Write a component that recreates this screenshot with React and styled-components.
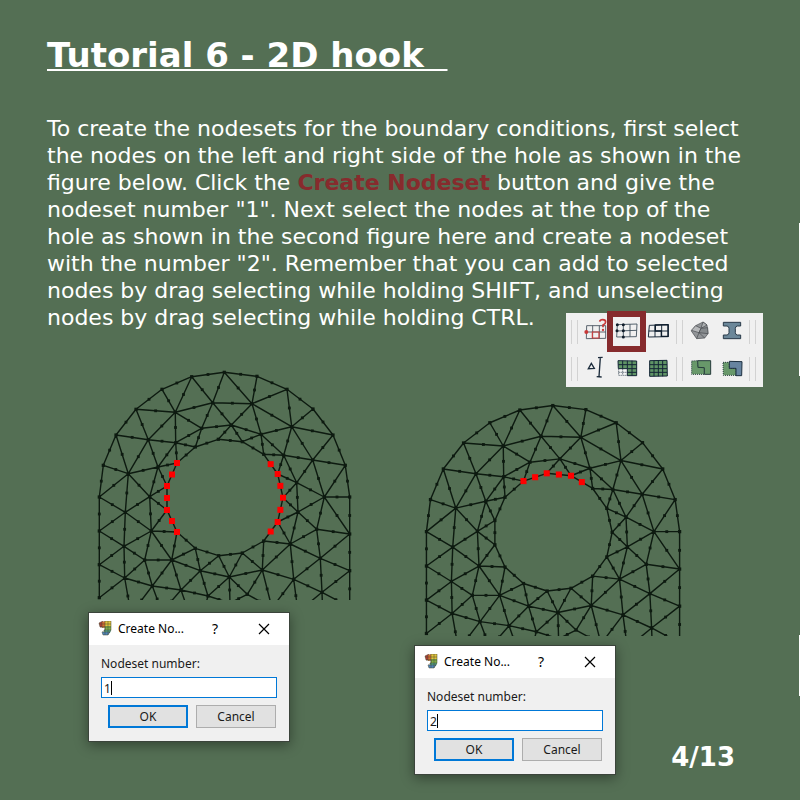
import React from "react";
import styled, { createGlobalStyle } from "styled-components";

const GlobalStyle = createGlobalStyle`
  * { box-sizing: border-box; }
  body { margin: 0; background: #546f54; }
`;

const Slide = styled.main`
  position: relative;
  min-height: 100vh;
  overflow: hidden;
  background: #546f54;
  color: #fff;
  font-family: "DejaVu Sans", sans-serif;
`;

const Title = styled.h1`
  margin: 0;
  padding: 35px 47px 0;
  font-size: 34px;
  line-height: 40px;
  font-weight: bold;
  white-space: pre;
  text-decoration: underline;
  text-decoration-thickness: 2px;
  text-underline-offset: 2px;
`;

const Intro = styled.section`
  position: relative;
  padding: 40px 47px 0;
`;

const Text = styled.p`
  margin: 0;
  max-width: 706px;
  font-size: 22px;
  line-height: 27px;
`;

const Term = styled.strong`
  color: #872b2d;
`;

const Toolbar = styled.div`
  position: absolute;
  right: 37px;
  bottom: -56px;
  width: 197px;
  padding-left: 4px;
  background: #f0f0f0;
`;

const ToolRow = styled.div`
  display: flex;
  align-items: center;
  height: 37px;
`;

const Separator = styled.span`
  width: 7px;
  height: 24px;
  margin: 0 1px;
  border: solid #d2d2d2;
  border-width: 0 1px;
`;

const ToolButton = styled.button`
  position: relative;
  display: block;
  width: 32px;
  height: 37px;
  padding: 0;
  border: 0;
  background: none;
  svg { display: block; }
  &[aria-pressed="true"]::after {
    content: "";
    position: absolute;
    inset: -2px -3px -2px -4px;
    border: 6px solid #862b2d;
  }
`;

const Figures = styled.section`
  display: grid;
  grid-template-columns: 274px 1fr;
  column-gap: 52px;
  align-items: start;
  padding: 37px 65px 25px 88px;
`;

const Figure = styled.figure`
  grid-row: 1;
  grid-column: ${(p) => p.$column};
  margin: 0;
  padding-top: ${(p) => p.$drop}px;
`;

const Mesh = styled.svg`
  display: block;
  margin-bottom: ${(p) => p.$gap}px;
`;

const Dialog = styled.form`
  width: 202px;
  border: 1px solid #3b443b;
  background: #f0f0f0;
  color: #1a1a1a;
  font: 12px/16px "Noto Sans", sans-serif;
  box-shadow: 0 3px 12px rgba(0, 0, 0, 0.4);
`;

const TitleBar = styled.header`
  display: flex;
  align-items: center;
  height: 32px;
  padding: 0 15px 0 9px;
  background: #fff;
  color: #000;
`;

const DialogName = styled.span`
  flex: 1;
  margin-left: 6px;
`;

const BarButton = styled.button`
  width: 20px;
  height: 20px;
  margin-left: ${(p) => p.$gap || 0}px;
  padding: 0;
  border: 0;
  background: none;
  color: #000;
  font: 14px/18px "Noto Sans", sans-serif;
  svg { display: block; margin: 4px; }
`;

const DialogBody = styled.div`
  padding: 11px 12px 13px;
`;

const Field = styled.div`
  position: relative;
  margin: 5px 0 7px;
`;

const FieldLabel = styled.label`
  display: block;
`;

const NumberInput = styled.input`
  display: block;
  width: 100%;
  height: 21px;
  padding: 1px 2px 0;
  border: 1px solid #0078d7;
  border-radius: 0;
  background: #fff;
  color: #1a1a1a;
  font: 12px/16px "Noto Sans", sans-serif;
`;

const Caret = styled.span`
  position: absolute;
  left: 10px;
  top: 4px;
  width: 1px;
  height: 14px;
  background: #000;
`;

const Actions = styled.div`
  display: flex;
  justify-content: flex-end;
  gap: 8px;
  padding-right: 1px;
`;

const ActionButton = styled.button`
  width: 80px;
  height: 23px;
  padding: 0;
  border: ${(p) => (p.$primary ? "2px solid #0078d7" : "1px solid #adadad")};
  background: #e1e1e1;
  color: #1a1a1a;
  font: 12px/16px "Noto Sans", sans-serif;
`;

const PageNumber = styled.footer`
  grid-row: 1;
  grid-column: 2;
  align-self: end;
  justify-self: end;
  margin-bottom: 2px;
  font-size: 26px;
  line-height: 32px;
  font-weight: bold;
`;

const EdgeMark = styled.span`
  position: absolute;
  right: 0;
  top: ${(p) => p.$top}px;
  width: 1px;
  height: ${(p) => p.$height}px;
  background: #fff;
`;

const NODES = {
  A0: [224.3, 372.3], A1: [191.7, 376.7], A2: [162, 389.3], A3: [136, 409.3], A4: [116, 435],
  A5: [103.3, 465.3], A6: [99.3, 497], A7: [99.3, 531], A8: [99.3, 564.7], A9: [99.3, 597.7],
  B1: [257, 376.3], B2: [287, 389.3], B3: [313, 409], B4: [333, 435], B5: [345.3, 465.3],
  B6: [349.7, 497], B7: [349.7, 534], B8: [349.7, 570.7], B9: [349.7, 607],
  C1: [175.3, 412.3], C2: [212.7, 402.7], C3: [252, 403.7], C4: [291.7, 426.7],
  C5: [148.3, 439.7], C6: [128.3, 473.7], C7: [312.7, 460],
  D1: [175.7, 442.7], D2: [201.7, 428.3], D3: [231.3, 425], D4: [261, 434.3],
  D5: [283.7, 455.3], D6: [158, 467], D7: [296.7, 482.7],
  H1: [195.3, 447], H2: [218.3, 439.3], H3: [242.3, 441.7], H4: [263.7, 454.3],
  H5: [177, 463], H6: [167, 486], H7: [167, 510], H8: [177, 532], H9: [195.3, 548.3],
  H10: [218.7, 555.7], H11: [242.3, 553], H12: [263.7, 541], H13: [277.7, 522],
  H14: [283, 497.7], H15: [277.7, 474],
  E1: [149.7, 496.7], E2: [125.3, 512.3], E3: [151.3, 531], E4: [124, 546.3],
  E5: [144.7, 560], E6: [171.7, 560], E7: [124.7, 578], E8: [152.3, 586], E9: [181, 590],
  E10: [200.3, 570.7], E11: [229.3, 577], E12: [208, 596],
  F1: [324.3, 497], F2: [298, 512], F3: [316.7, 529.3], F4: [290.3, 544], F5: [320.3, 558.3],
  F6: [262.3, 570], F7: [293.7, 579.3], F8: [322, 592.3], F9: [247.3, 594.3],
  G1: [131, 614], G2: [162, 612], G3: [189, 613], G4: [202, 618], G5: [230, 603],
  G6: [272, 608], G7: [298, 612], G8: [323, 620],
};

const EDGES = `
A0-A1 A1-A2 A2-A3 A3-A4 A4-A5 A5-A6 A6-A7 A7-A8 A8-A9
A0-B1 B1-B2 B2-B3 B3-B4 B4-B5 B5-B6 B6-B7 B7-B8 B8-B9
A1-C1 A1-C2 A2-C1 A3-C1 A3-C5 A4-C5 A4-C6 A5-C6 A6-C6 C6-C5 C6-D6 C6-E1 C6-E2
A6-E2 A7-E2 A7-E4 A8-E4 A8-E7 A9-E7 A0-C2 A0-C3 B1-C3 B2-C3 B2-C4 B3-C4 B4-C4
B4-C7 B5-C7 C4-C7 C1-C2 C1-C5 C1-D1 C1-D2 C2-D2 C2-C3 C2-D3 C3-D3 C3-D4 C3-C4
C4-D4 C4-D5 C5-D1 C5-D6 D1-D2 D1-D6 D1-H5 D1-H1 D2-H1 D2-D3 D3-H2 D3-H3 D3-D4
D4-H3 D4-H4 D4-D5 D5-H4 D5-H15 D5-D7 D5-C7 C7-D7 C7-F1 B5-F1 H15-D7 D7-F1 D7-F2
D7-H14 H14-F2 H13-F2 F2-F1 F2-F3 F2-F4 F1-F3 F1-B6 F1-B7 F3-B7 F3-F4 F3-F5 F5-B7
F5-B8 F5-F4 F5-F7 F5-F8 F4-H13 F4-H12 F4-F6 F4-F7 F6-H12 F6-H11 F6-F7 F6-E11
F6-F9 F6-G6 E11-H11 E11-H10 D6-H5 D6-H6 D6-E1 E1-H6 E1-H7 E1-E2 E1-E3 H7-E3
E3-H8 E3-E2 E3-E4 E3-E5 E3-E6 H8-E6 E6-H9 E6-E5 E6-E8 E6-E9 E6-E10 H9-E10
E10-H10 E10-E9 E10-E12 E10-E11 E2-E4 E4-E5 E4-E7 E5-E7 E5-E8 E7-E8 E8-E9 E9-E12
E11-E12 E11-F9 E11-G5 E7-G1 E8-G1 E8-G2 E9-G2 E9-G3 E12-G4 E12-G5 F9-G5 F9-G6
F7-G6 F7-G7 F7-F8 F8-B8 F8-G7 F8-G8 F8-B9
H5-H1 H1-H2 H2-H3 H3-H4 H4-H15 H15-H14 H14-H13 H13-H12 H12-H11 H11-H10 H10-H9
H9-H8 H8-H7 H7-H6 H6-H5
`.trim().split(/\s+/).map((e) => e.split("-"));

const locate = (key) => {
  const [a, b] = key.split("-");
  if (!b) return NODES[a];
  return [0, 1].map((i) => (NODES[a][i] + NODES[b][i]) / 2);
};

const SIDES = [
  "H5", "H5-H6", "H6", "H6-H7", "H7", "H7-H8", "H8",
  "H4-H15", "H15", "H15-H14", "H14", "H14-H13", "H13", "H13-H12",
];
const TOP = ["H1", "H1-H2", "H2", "H2-H3", "H3", "H3-H4"];

const Dot = ({ at, size, fill }) => (
  <rect x={at[0] - size / 2} y={at[1] - size / 2} width={size} height={size} fill={fill} />
);

function HookMesh({ selected, left, width, height, gap, label }) {
  return (
    <Mesh $gap={gap} width={width} height={height} viewBox={`${left} 368 271 232`} role="img" aria-label={label}>
      <path
        d={EDGES.map(([a, b]) => `M${NODES[a].join(" ")}L${NODES[b].join(" ")}`).join("")}
        stroke="#0d1a10"
        strokeWidth="1.4"
        fill="none"
      />
      {EDGES.map((e) => <Dot key={e.join()} at={locate(e.join("-"))} size={2.8} fill="#0d1a10" />)}
      {Object.keys(NODES).map((k) => <Dot key={k} at={NODES[k]} size={3.2} fill="#0d1a10" />)}
      {selected.map((k) => <Dot key={k} at={locate(k)} size={6} fill="#ff0000" />)}
    </Mesh>
  );
}

const INK = "#1c2c3c";

function QueryNodesIcon() {
  return (
    <svg width="32" height="37" viewBox="57 24 96 111" fill="none">
      <path d="M80 62H137V100L79 101ZM79 81H137M98 62V101M118 62V100" stroke="#3c4854" strokeWidth="2.5" />
      <path d="M97 81H117V99H97Z" stroke="#d04040" strokeWidth="3.5" />
      <circle cx="79" cy="81" r="6" fill="#c83838" />
      <path d="M119 50Q120 44 128 44Q137 44 137 51Q137 56 129 60V67" stroke="#c83838" strokeWidth="5" />
      <circle cx="129" cy="75" r="3.5" fill="#c83838" />
    </svg>
  );
}

function CreateNodesetIcon() {
  return (
    <svg width="32" height="37" viewBox="153 24 96 111" fill="none">
      <path d="M172 59L231 57L229 95L170 96ZM171 78L230 76M190 58V96M210 58V95" stroke="#344452" strokeWidth="2.5" />
      {[[172, 59], [190, 59], [171, 77], [190, 77], [190, 96]].map(([x, y]) => (
        <circle key={`${x},${y}`} cx={x} cy={y} r="4.5" fill="#101c2a" />
      ))}
    </svg>
  );
}

function CreateElementsetIcon() {
  return (
    <svg width="32" height="37" viewBox="249 24 96 111" fill="none">
      <path d="M268 61L325 59V95L265 96ZM266 78H325M285 60V96M305 60V95" stroke={INK} strokeWidth="3" />
      <path d="M286 60L324 59V94H304V78H286Z" stroke="#0d1c2c" strokeWidth="4" />
    </svg>
  );
}

function SolidIcon() {
  return (
    <svg width="32" height="37" viewBox="372 24 96 111" strokeWidth="2" stroke="#45494d" strokeLinejoin="round">
      <path d="M407 62L429 51L441 60L444 86L434 99L410 101L394 78Z" fill="#929598" />
      <path d="M429 51L423 70L441 60Z" fill="#adb0b2" />
      <path d="M394 76L407 62L423 70L417 83Z" fill="#b6b8ba" />
      <path d="M423 70L443 68L444 86L417 83Z" fill="#85898c" />
      <path d="M417 83L410 101M417 83L434 99" fill="none" />
    </svg>
  );
}

function BeamIcon() {
  return (
    <svg width="32" height="37" viewBox="468 24 96 111">
      <path
        d="M490 52H542V63H532Q526 64 526 70V83Q526 89 532 90H542V101H490V90H501Q507 89 507 83V70Q507 64 501 63H490Z"
        fill="#6b8799" stroke="#293a49" strokeWidth="3"
      />
    </svg>
  );
}

function MeshSizeIcon() {
  return (
    <svg width="32" height="37" viewBox="57 135 96 111" fill="none" stroke={INK}>
      <path d="M94 175L103 190L85 191Z" strokeWidth="4" />
      <path d="M114 158L128 157M121 158L117 215M110 215L125 216" strokeWidth="4" />
    </svg>
  );
}

function MeshPartIcon() {
  return (
    <svg width="32" height="37" viewBox="153 135 96 111" fill="none">
      <path d="M174 167L230 168L230 212H202V191H175Z" fill="#5f9465" />
      <path d="M176 192H201V212H176Z" fill="#f6f6f6" />
      <path d="M174 167L230 168L230 212H202V191H175ZM175 179H230M202 191H230M202 202H230M188 167V191M202 167V191M216 167V212" stroke="#142536" strokeWidth="3" />
      <path d="M176 193V211H202M176 202H202M188 193V211" stroke={INK} strokeWidth="2.5" strokeDasharray="3 3" />
    </svg>
  );
}

function MeshAllIcon() {
  return (
    <svg width="32" height="37" viewBox="249 135 96 111">
      <path d="M269 167L321 166L322 213L269 214ZM269 179H321M269 191H321M269 202H321M282 167V214M295 167V214M308 167V214" fill="#5f9465" stroke="#142536" strokeWidth="3" />
    </svg>
  );
}

function MergePartsIcon() {
  return (
    <svg width="32" height="37" viewBox="372 135 96 111">
      <path d="M395 168L413 167L414 187L433 188V208H395Z" fill="#68986a" stroke="#263c3c" strokeWidth="3" strokeDasharray="3 3" />
      <path d="M413 167H452V208L433 208V188L414 187Z" fill="#68986a" stroke="#263c3c" strokeWidth="3" />
    </svg>
  );
}

function ComparePartsIcon() {
  return (
    <svg width="32" height="37" viewBox="468 135 96 111">
      <path d="M489 172H508V190H528V211H490Z" fill="#68986a" stroke="#263c3c" strokeWidth="3" strokeDasharray="3 3" />
      <path d="M508 169L546 170L545 212H528V190H508Z" fill="#6784a0" stroke="#1d3040" strokeWidth="3" />
    </svg>
  );
}

const TOOLS = [
  [
    [["Query nodes", QueryNodesIcon], ["Create Nodeset", CreateNodesetIcon, true], ["Create elementset", CreateElementsetIcon]],
    [["Solid section", SolidIcon], ["Beam section", BeamIcon]],
  ],
  [
    [["Mesh size", MeshSizeIcon], ["Mesh part", MeshPartIcon], ["Mesh all", MeshAllIcon]],
    [["Merge parts", MergePartsIcon], ["Compare parts", ComparePartsIcon]],
  ],
];

function ToolPanel() {
  return (
    <Toolbar role="toolbar">
      {TOOLS.map((groups, row) => (
        <ToolRow key={row}>
          {groups.map((tools, group) => (
            <React.Fragment key={group}>
              <Separator />
              {tools.map(([name, Icon, pressed]) => (
                <ToolButton key={name} type="button" aria-label={name} aria-pressed={pressed}>
                  <Icon />
                </ToolButton>
              ))}
            </React.Fragment>
          ))}
          <Separator />
        </ToolRow>
      ))}
    </Toolbar>
  );
}

function AppIcon() {
  return (
    <svg width="14" height="16" viewBox="0 0 14 16">
      <path d="M1 2L5 0V6H2Z" fill="#b63d38" />
      <path d="M4 1L8 0V6L4 7Z" fill="#d9702f" />
      <path d="M7 0H13V5H7Z" fill="#e3c53d" />
      <path d="M7 5H13V9H7Z" fill="#7fb04a" />
      <path d="M6 9H13L12 12H6Z" fill="#4fa58a" />
      <path d="M4 11L12 11L10 14H5Z" fill="#4e86bd" />
      <path d="M1 3L13 3M2 6H13M6 9H13M5 11H12M4 1V6M7 0V14M10 0V14M1 2L5 0H13V9L10 14H5L4 11L7 9V6H2Z" fill="none" stroke="#4a4a32" strokeWidth="0.5" />
    </svg>
  );
}

function NodesetDialog({ number }) {
  const id = `nodeset-${number}`;
  return (
    <Dialog onSubmit={(e) => e.preventDefault()}>
      <TitleBar>
        <AppIcon />
        <DialogName>Create No...</DialogName>
        <BarButton type="button" aria-label="Help">?</BarButton>
        <BarButton type="button" aria-label="Close" $gap={29}>
          <svg width="12" height="12" viewBox="0 0 12 12">
            <path d="M1 1L11 11M11 1L1 11" stroke="#000" strokeWidth="1.2" />
          </svg>
        </BarButton>
      </TitleBar>
      <DialogBody>
        <FieldLabel htmlFor={id}>Nodeset number:</FieldLabel>
        <Field>
          <NumberInput id={id} defaultValue={number} />
          <Caret />
        </Field>
        <Actions>
          <ActionButton $primary type="submit">OK</ActionButton>
          <ActionButton type="button">Cancel</ActionButton>
        </Actions>
      </DialogBody>
    </Dialog>
  );
}

export default function App() {
  return (
    <Slide>
      <GlobalStyle />
      <Title>{"Tutorial 6 - 2D hook\u00a0\u00a0"}</Title>
      <Intro>
        <Text>
          To create the nodesets for the boundary conditions, first select the nodes on the left
          and right side of the hole as shown in the figure below. Click the{" "}
          <Term>Create Nodeset</Term> button and give the nodeset number "1". Next select the
          nodes at the top of the hole as shown in the second figure here and create a nodeset
          with the number "2". Remember that you can add to selected nodes by drag selecting
          while holding SHIFT, and unselecting nodes by drag selecting while holding CTRL.
        </Text>
        <ToolPanel />
      </Intro>
      <Figures>
        <Figure $column={1} $drop={0}>
          <HookMesh selected={SIDES} left={88} width={271} height={232} gap={12} label="Nodes at the sides of the hole" />
          <NodesetDialog number="1" />
        </Figure>
        <Figure $column={2} $drop={33}>
          <HookMesh selected={TOP} left={87} width={274} height={235} gap={9} label="Nodes at the top of the hole" />
          <NodesetDialog number="2" />
        </Figure>
        <PageNumber>4/13</PageNumber>
      </Figures>
      <EdgeMark $top={223} $height={153} />
      <EdgeMark $top={635} $height={61} />
    </Slide>
  );
}
